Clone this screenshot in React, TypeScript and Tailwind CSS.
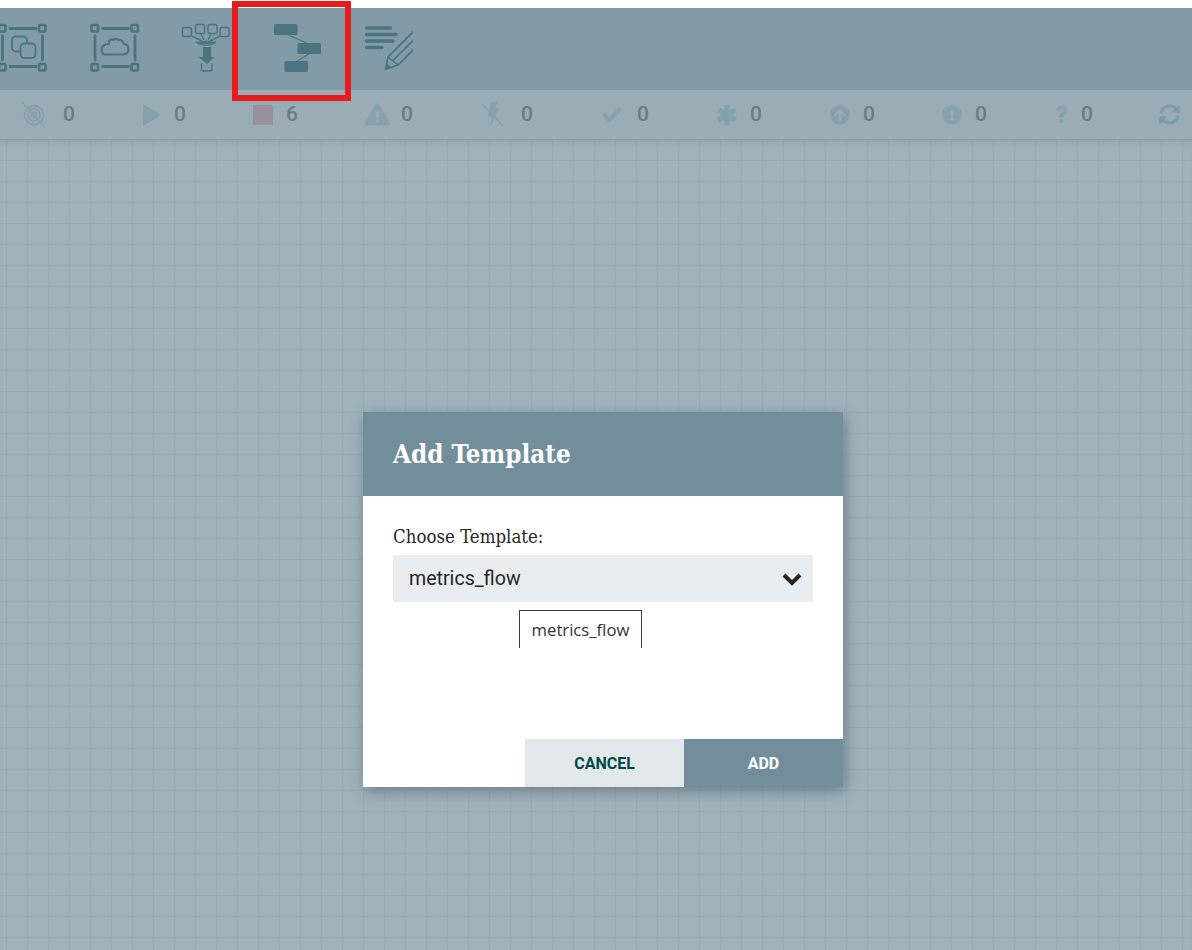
import React from 'react';
import {
  FaArrowCircleUp,
  FaCheck,
  FaExclamationCircle,
  FaExclamationTriangle,
  FaQuestion,
  FaSyncAlt,
} from 'react-icons/fa';

const ink = '#4b7380';
const muted = '#86a0ad';

// Corner handles + side bars shared by the two group icons
function Frame({ x }: { x: number }) {
  const l = x;
  const r = x + 40;
  return (
    <g stroke={ink} fill="none">
      {[
        [l, 25],
        [r, 25],
        [l, 64],
        [r, 64],
      ].map(([cx, cy]) => (
        <rect key={`${cx}-${cy}`} x={cx} y={cy} width="6.5" height="6.5" rx="1" strokeWidth="2.6" />
      ))}
      <path d={`M${l + 11} 28.500H${r - 3}M${l + 11} 66.500H${r - 3}`} strokeWidth="2.800" strokeLinecap="round" />
      <path d={`M${l + 3.5} 36V60M${r + 3.5} 36V60`} strokeWidth="2.800" strokeLinecap="round" />
    </g>
  );
}

function ProcessGroupIcon() {
  return (
    <svg className="h-[82px] w-[60px] shrink-0" viewBox="0 8 60 82">
      <Frame x={-1} />
      <g stroke={ink} strokeWidth="1.800" fill="none">
        <path d="M20.500 51.500h-4.500a4 4 0 0 1-4-4v-7a4 4 0 0 1 4-4h7a4 4 0 0 1 4 4v3.500" />
        <rect x="20.500" y="43.500" width="15" height="14.500" rx="4" />
      </g>
    </svg>
  );
}

function RemoteGroupIcon() {
  return (
    <svg className="ml-[30px] h-[82px] w-[60px] shrink-0" viewBox="90 8 60 82">
      <Frame x={91.5} />
      <path
        d="M105 54.500h18c3.500 0 5.500-2.500 5.500-5.500 0-2.800-2-5-4.800-5.300-.6-2.700-3-4.400-5.600-4.100-1.200-.8-3.200-.9-4.600.1-1.300-.6-3.300-.2-4.200 1.300-.6 1.300-.5 2-.5 3-3.300-.2-7.300 1.800-7.300 5.300 0 3 1.500 5.200 3.500 5.200z"
        stroke={ink}
        strokeWidth="2.200"
        fill="none"
      />
    </svg>
  );
}

function InputPortIcon() {
  return (
    <svg className="ml-[30px] h-[82px] w-[60px] shrink-0" viewBox="180 8 60 82">
      <g stroke={ink} fill="none" strokeWidth="1.400">
        <rect x="182.500" y="27.500" width="9" height="9" rx="2" />
        <rect x="195.500" y="24.500" width="9" height="9" rx="2" />
        <rect x="208" y="24.500" width="9" height="9" rx="2" />
        <rect x="220" y="27.500" width="9" height="9" rx="2" />
        <path d="M192 36l10 5M201 34l3 6M211 34l-3 6M220 36l-10 5" />
        <path d="M196 41.500c3 5 17 5 20 0" />
      </g>
      <ellipse cx="206" cy="42.500" rx="8.500" ry="1.800" fill={ink} />
      <path d="M203 47h8v10h3.500l-7.500 7-8.500-7h4.500z" fill={ink} />
      <path d="M201.500 63v6a2 2 0 0 0 2 2h6.500a2 2 0 0 0 2-2v-6" stroke={ink} strokeWidth="1.500" fill="none" />
    </svg>
  );
}

function TemplateIcon() {
  return (
    <svg className="ml-[30px] h-[82px] w-[60px] shrink-0" viewBox="270 8 60 82">
      <path d="M288 35l20 8.500M309 54l-12 7" stroke={ink} strokeWidth="1.200" fill="none" />
      <rect x="274" y="24" width="23.500" height="11" rx="1.500" fill={ink} />
      <rect x="297.500" y="43" width="23.500" height="11" rx="1.500" fill={ink} />
      <rect x="284.500" y="61" width="23.500" height="11" rx="1.500" fill={ink} />
    </svg>
  );
}

function LabelIcon() {
  return (
    <svg className="ml-[30px] h-[82px] w-[53px] shrink-0" viewBox="360 8 53 82">
      <g stroke={ink} strokeWidth="3.400" strokeLinecap="round">
        <path d="M366.500 28H390.500M366.500 34.500H396M366.500 41H393M366.500 47.500H382" />
      </g>
      <g stroke={ink} strokeWidth="1.600" fill="none">
        <path d="M414 31L388 57L385.500 69L398 65L414 49" />
        <path d="M414 39.500L393 60.500M388 57L398 65" />
      </g>
      <path d="M385 70l1.500-7 5.500 5z" fill={ink} />
    </svg>
  );
}

function TargetIcon() {
  return (
    <svg viewBox="0 0 22 26" className="h-[26px] w-[22px]" fill="none" stroke={muted}>
      <circle cx="11" cy="13" r="9.500" strokeWidth="1.800" />
      <circle cx="11" cy="13" r="6" strokeWidth="1.800" />
      <circle cx="11" cy="13" r="2.600" strokeWidth="2" />
      <path d="M0 1l22 24" strokeWidth="1.300" />
    </svg>
  );
}

function PlayIcon() {
  return (
    <svg viewBox="0 0 18 22" className="h-[22px] w-[18px]">
      <path d="M0 0L18 11L0 22z" fill={muted} />
    </svg>
  );
}

function StopIcon() {
  return <div className="h-[20px] w-[20px] bg-[#98909c]" />;
}

function BoltOffIcon() {
  return (
    <svg viewBox="0 0 22 26" className="h-[26px] w-[22px]" fill="none">
      <path d="M9 0h7l-3 6h4L8 25l2-10H6z" fill={muted} />
      <path d="M1 3l20 21" stroke={muted} strokeWidth="1.500" />
    </svg>
  );
}

function AsteriskIcon() {
  return (
    <svg viewBox="0 0 20 20" className="h-[20px] w-[20px]" stroke={muted} strokeWidth="5.500" strokeLinecap="butt">
      <path d="M10 0V20M1.300 5L18.700 15M18.700 5L1.300 15" />
    </svg>
  );
}

const statusItems = [
  { key: 'running-off', icon: <TargetIcon />, box: 'w-[120px]', slot: 'w-[40px]', value: '0' },
  { key: 'play', icon: <PlayIcon />, box: 'w-[110px]', slot: 'w-[31px]', value: '0' },
  { key: 'stop', icon: <StopIcon />, box: 'w-[112px]', slot: 'w-[33px]', value: '6' },
  { key: 'warn', icon: <FaExclamationTriangle className="h-[23px] w-[25px] text-[#86a0ad]" />, box: 'w-[117px]', slot: 'w-[36px]', value: '0' },
  { key: 'bolt', icon: <BoltOffIcon />, box: 'w-[119px]', slot: 'w-[39px]', value: '0' },
  { key: 'check', icon: <FaCheck className="h-[20px] w-[22px] text-[#86a0ad]" />, box: 'w-[116px]', slot: 'w-[36px]', value: '0' },
  { key: 'asterisk', icon: <AsteriskIcon />, box: 'w-[113px]', slot: 'w-[33px]', value: '0' },
  { key: 'up', icon: <FaArrowCircleUp className="h-[20px] w-[20px] text-[#86a0ad]" />, box: 'w-[112px]', slot: 'w-[33px]', value: '0' },
  { key: 'bang', icon: <FaExclamationCircle className="h-[20px] w-[20px] text-[#86a0ad]" />, box: 'w-[113px]', slot: 'w-[33px]', value: '0' },
  { key: 'help', icon: <FaQuestion className="h-[19px] w-[13px] text-[#86a0ad]" />, box: 'w-[104px]', slot: 'w-[26px]', value: '0' },
];

export default function App() {
  return (
    <div className="relative flex h-[950px] w-[1192px] flex-col overflow-hidden bg-white font-['Roboto',sans-serif]">
      <div className="h-2 shrink-0 bg-white" />

      {/* Toolbar */}
      <div className="flex h-[82px] shrink-0 items-center bg-[#839ba7]">
        <ProcessGroupIcon />
        <RemoteGroupIcon />
        <InputPortIcon />
        <TemplateIcon />
        <LabelIcon />
      </div>

      {/* Status bar */}
      <div className="flex h-[50px] shrink-0 items-center border-b border-[#86a0ab] bg-[#9aadb7] pl-[23px]">
        {statusItems.map((item) => (
          <div key={item.key} className={`flex items-center ${item.box}`}>
            <div className={`flex items-center ${item.slot}`}>{item.icon}</div>
            <span className="text-[21px] font-medium leading-none text-[#6d7a84]">{item.value}</span>
          </div>
        ))}
        <FaSyncAlt className="h-[21px] w-[21px] text-[#7f9ba9]" />
      </div>

      {/* Canvas */}
      <div className="flex-1 bg-[#a0b3bd] bg-[linear-gradient(to_right,#99acb6_1px,transparent_1px),linear-gradient(to_bottom,#99acb6_1px,transparent_1px)] bg-[size:21px_21px] bg-[position:6px_-1px] shadow-[inset_0_6px_6px_-4px_rgba(90,115,128,0.25)]" />

      {/* Highlight box */}
      <div className="absolute left-[232px] top-[1px] h-[100px] w-[119px] border-[6px] border-[#e81c1c]" />

      {/* Add Template dialog */}
      <div className="absolute left-[363px] top-[412px] flex h-[375px] w-[480px] flex-col bg-white shadow-[2px_4px_14px_rgba(40,60,70,0.45)]">
        <div className="flex h-[84px] items-center bg-[#728e9b] pl-[30px]">
          <h2 className="font-['DejaVu_Serif_Condensed','DejaVu_Serif',serif] text-[25.800px] font-bold text-white">Add Template</h2>
        </div>
        <div className="flex-1 px-[30px] pt-[31px]">
          <div className="font-['DejaVu_Serif_Condensed','DejaVu_Serif',serif] text-[18.500px] leading-[20px] text-[#262626]">Choose Template:</div>
          <div className="mt-[8px] flex h-[47px] items-center justify-between bg-[#eaedf0] pl-[16px] pr-[11px]">
            <span className="text-[19.600px] text-[#262626]">metrics_flow</span>
            <svg viewBox="0 0 20 14" className="h-[14px] w-[20px]" fill="none" stroke="#262626" strokeWidth="4">
              <path d="M2 3l8 8 8-8" />
            </svg>
          </div>
        </div>
        <div className="flex justify-end">
          <button className="h-[48px] w-[159px] bg-[#e3e8eb] pt-px text-[16px] font-bold text-[#004849]">CANCEL</button>
          <button className="h-[48px] w-[159px] bg-[#728e9b] pt-px text-[16px] font-bold text-white">ADD</button>
        </div>
      </div>

      {/* Tooltip */}
      <div className="absolute left-[519px] top-[610px] flex h-[38px] w-[123px] justify-center border-x border-t border-[#3a3a3a] bg-white pt-[8px] font-['Open_Sans',sans-serif] text-[16.700px] leading-[22px] text-[#333]">
        metrics_flow
      </div>
    </div>
  );
}
